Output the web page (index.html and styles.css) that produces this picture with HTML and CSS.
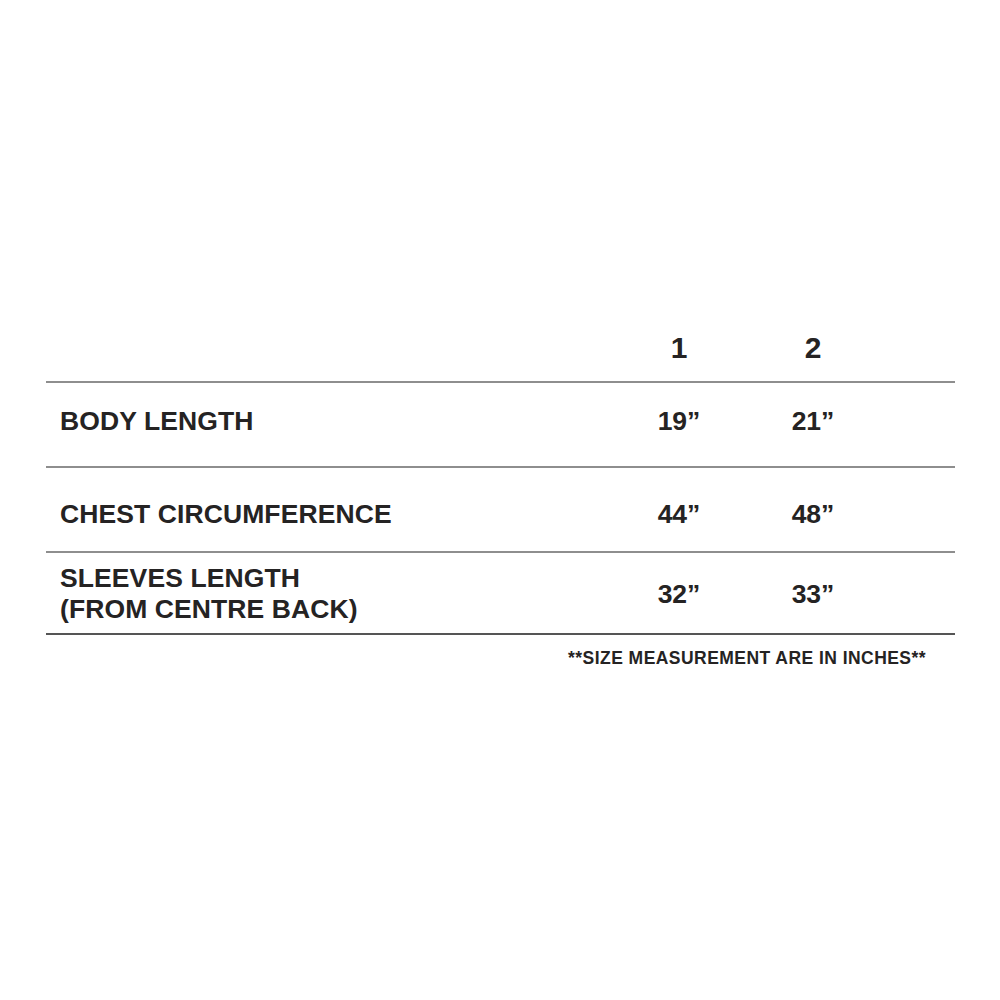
FILE: index.html
```html
<!DOCTYPE html>
<html lang="en">
<head>
<meta charset="utf-8">
<title>Size Chart</title>
<link rel="stylesheet" href="styles.css">
</head>
<body>
<main class="page">
  <section class="size-table">
    <div class="row row-head">
      <div class="cell label"></div>
      <div class="cell size">1</div>
      <div class="cell size">2</div>
      <div class="cell"></div>
    </div>
    <div class="row row-body">
      <div class="cell label">BODY LENGTH</div>
      <div class="cell value">19”</div>
      <div class="cell value">21”</div>
      <div class="cell"></div>
    </div>
    <div class="row row-chest">
      <div class="cell label">CHEST CIRCUMFERENCE</div>
      <div class="cell value">44”</div>
      <div class="cell value">48”</div>
      <div class="cell"></div>
    </div>
    <div class="row row-sleeves">
      <div class="cell label">SLEEVES LENGTH<br>(FROM CENTRE BACK)</div>
      <div class="cell value">32”</div>
      <div class="cell value">33”</div>
      <div class="cell"></div>
    </div>
  </section>
  <p class="note">**SIZE MEASUREMENT ARE IN INCHES**</p>
</main>
</body>
</html>
```

FILE: styles.css
```css
html, body {
  margin: 0;
  padding: 0;
  background: #ffffff;
}

body {
  font-family: "Liberation Sans", Arial, sans-serif;
  font-weight: bold;
  color: #252323;
}

.page {
  padding: 333px 45px 0 46px;
}

.size-table {
  display: flex;
  flex-direction: column;
}

.row {
  display: grid;
  grid-template-columns: 1fr 134px 134px 75px;
  border-bottom: 2px solid #8e8e8e;
  font-size: 26.5px;
  line-height: 32px;
}

.cell.label {
  padding-left: 14px;
  letter-spacing: 0.1px;
}

.cell.size,
.cell.value {
  text-align: center;
  align-self: center;
}

.row-head {
  font-size: 30px;
  line-height: 30px;
  padding-bottom: 18px;
}

.row-body {
  padding-top: 22px;
  padding-bottom: 29px;
}

.row-chest {
  padding-top: 30px;
  padding-bottom: 21px;
}

.row-sleeves {
  line-height: 31px;
  padding-top: 10px;
  padding-bottom: 8px;
  border-bottom-color: #555555;
}

.note {
  margin: 15px 29px 0 0;
  text-align: right;
  font-size: 17.5px;
  line-height: 17.5px;
  letter-spacing: 0.45px;
}
```
